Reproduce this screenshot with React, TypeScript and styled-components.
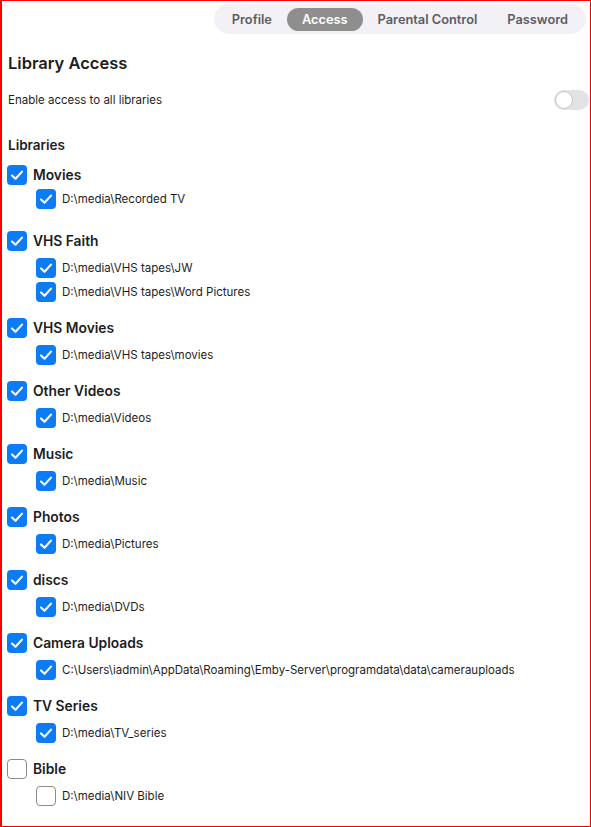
import React from 'react';
import styled, { createGlobalStyle } from 'styled-components';

const BLUE = '#0b7cf6';
const INK = '#1d1d1f';

const GlobalStyle = createGlobalStyle`
  html, body {
    margin: 0;
    padding: 0;
    background: #ffffff;
  }
  body {
    font-family: Inter, "Noto Sans", "Liberation Sans", sans-serif;
    color: ${INK};
  }
`;

const Frame = styled.div`
  box-sizing: border-box;
  width: 591px;
  height: 827px;
  border: 1px solid #ff0000;
  border-left-width: 2px;
  display: flex;
  flex-direction: column;
  overflow: hidden;
`;

const TabBar = styled.nav`
  align-self: flex-end;
  margin: 3px 4px 0 0;
  height: 30px;
  padding: 0 3px;
  border-radius: 15px;
  background: #f2f2f6;
  display: flex;
  align-items: center;
`;

const Tab = styled.button<{ active?: boolean }>`
  border: none;
  height: 23px;
  padding: 0 15px;
  border-radius: 12px;
  font-family: inherit;
  font-size: 12.8px;
  font-weight: 600;
  background: ${({ active }) => (active ? '#8e8e8e' : 'transparent')};
  color: ${({ active }) => (active ? '#ffffff' : '#5c5c63')};
  cursor: pointer;
`;

const Heading = styled.h2`
  margin: 17px 0 0 6px;
  font-size: 16.5px;
  line-height: 24px;
  font-weight: 600;
`;

const SettingRow = styled.div`
  margin: 13px 1px 0 6px;
  height: 24px;
  display: flex;
  align-items: center;
  justify-content: space-between;
  font-size: 11.5px;
`;

const Toggle = styled.span<{ on?: boolean }>`
  position: relative;
  width: 35px;
  height: 20px;
  border-radius: 10px;
  background: ${({ on }) => (on ? BLUE : '#e3e3e3')};

  &::after {
    content: '';
    position: absolute;
    top: 1px;
    left: ${({ on }) => (on ? '16px' : '1px')};
    width: 16px;
    height: 16px;
    border-radius: 50%;
    background: #ffffff;
    border: 1px solid #c4c4c4;
  }
`;

const SubHeading = styled.h3`
  margin: 23px 0 7px 6px;
  font-size: 13.5px;
  line-height: 20px;
  font-weight: 600;
`;

const Group = styled.div<{ tight?: boolean }>`
  margin: 0 0 ${({ tight }) => (tight ? '17px' : '11px')} 5px;
  display: flex;
  flex-direction: column;
`;

const Row = styled.label<{ sub?: boolean }>`
  display: flex;
  align-items: center;
  gap: 6px;
  height: ${({ sub }) => (sub ? '24px' : '26px')};
  padding-left: ${({ sub }) => (sub ? '29px' : '0')};
  font-size: ${({ sub }) => (sub ? '11.5px' : '13.8px')};
  font-weight: ${({ sub }) => (sub ? 400 : 600)};
`;

const SubList = styled.div<{ tight?: boolean }>`
  margin-top: ${({ tight }) => (tight ? '-1px' : '2px')};
  display: flex;
  flex-direction: column;
`;

const Box = styled.span<{ checked?: boolean }>`
  box-sizing: border-box;
  flex: none;
  width: 20px;
  height: 20px;
  border-radius: 4px;
  background: ${({ checked }) => (checked ? BLUE : '#ffffff')};
  border: ${({ checked }) => (checked ? 'none' : '1.5px solid #8a8a8a')};
  display: flex;
  align-items: center;
  justify-content: center;
`;

const Check = ({ checked }: { checked: boolean }) => (
  <Box checked={checked}>
    {checked && (
      <svg width="20" height="20" viewBox="0 0 20 20">
        <path
          d="M5 10.4 L8.5 13.8 L15 6.6"
          fill="none"
          stroke="#fff"
          strokeWidth="2.1"
          strokeLinecap="round"
          strokeLinejoin="round"
        />
      </svg>
    )}
  </Box>
);

const libraries = [
  { name: 'Movies', on: true, paths: ['D:\\media\\Recorded TV'] },
  { name: 'VHS Faith', on: true, paths: ['D:\\media\\VHS tapes\\JW', 'D:\\media\\VHS tapes\\Word Pictures'] },
  { name: 'VHS Movies', on: true, paths: ['D:\\media\\VHS tapes\\movies'] },
  { name: 'Other Videos', on: true, paths: ['D:\\media\\Videos'] },
  { name: 'Music', on: true, paths: ['D:\\media\\Music'] },
  { name: 'Photos', on: true, paths: ['D:\\media\\Pictures'] },
  { name: 'discs', on: true, paths: ['D:\\media\\DVDs'] },
  {
    name: 'Camera Uploads',
    on: true,
    paths: ['C:\\Users\\iadmin\\AppData\\Roaming\\Emby-Server\\programdata\\data\\camerauploads'],
  },
  { name: 'TV Series', on: true, paths: ['D:\\media\\TV_series'] },
  { name: 'Bible', on: false, paths: ['D:\\media\\NIV Bible'] },
];

const tabs = ['Profile', 'Access', 'Parental Control', 'Password'];

export default function App() {
  return (
    <>
      <GlobalStyle />
      <Frame>
        <TabBar>
          {tabs.map((t) => (
            <Tab key={t} active={t === 'Access'}>
              {t}
            </Tab>
          ))}
        </TabBar>

        <Heading>Library Access</Heading>
        <SettingRow>
          <span>Enable access to all libraries</span>
          <Toggle />
        </SettingRow>

        <SubHeading>Libraries</SubHeading>
        {libraries.map((lib, i) => (
          <Group key={lib.name} tight={i === 0}>
            <Row>
              <Check checked={lib.on} />
              {lib.name}
            </Row>
            <SubList tight={i === 0}>
              {lib.paths.map((p) => (
                <Row sub key={p}>
                  <Check checked={lib.on} />
                  {p}
                </Row>
              ))}
            </SubList>
          </Group>
        ))}
      </Frame>
    </>
  );
}
